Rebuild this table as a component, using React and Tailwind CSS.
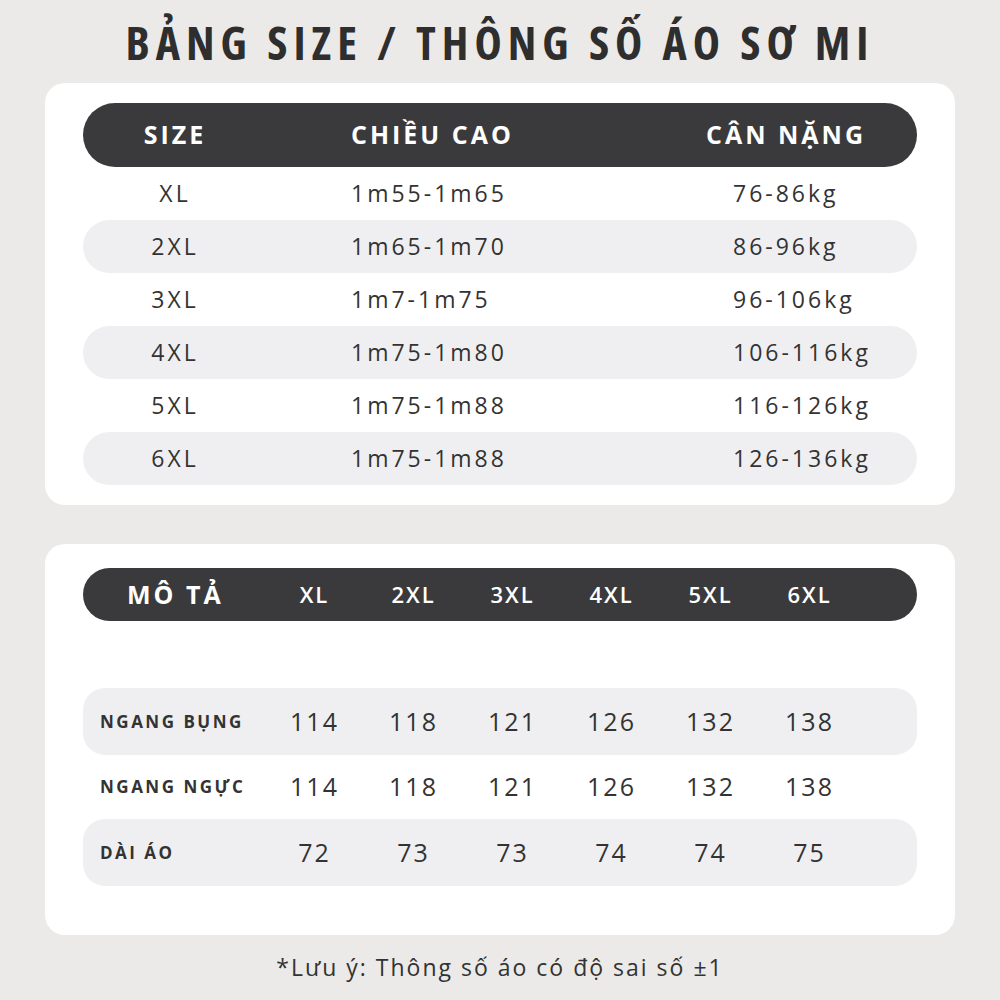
export default function App() {
  const rows1 = [
    ["XL", "1m55-1m65", "76-86kg"],
    ["2XL", "1m65-1m70", "86-96kg"],
    ["3XL", "1m7-1m75", "96-106kg"],
    ["4XL", "1m75-1m80", "106-116kg"],
    ["5XL", "1m75-1m88", "116-126kg"],
    ["6XL", "1m75-1m88", "126-136kg"],
  ];
  const sizes = ["XL", "2XL", "3XL", "4XL", "5XL", "6XL"];
  const rows2 = [
    { label: "NGANG BỤNG", vals: ["114", "118", "121", "126", "132", "138"], gray: true, h: "h-[67px]" },
    { label: "NGANG NGỰC", vals: ["114", "118", "121", "126", "132", "138"], gray: false, h: "h-[64px]" },
    { label: "DÀI ÁO", vals: ["72", "73", "73", "74", "74", "75"], gray: true, h: "h-[67px]" },
  ];
  return (
    <div className="w-[1000px] h-[1000px] bg-[#ebeae8] flex flex-col text-[#333333]" style={{ fontFamily: '"Open Sans", "Noto Sans", sans-serif' }}>
      <div className="h-[83px] flex items-center justify-center">
        <h1 className="text-[46px] font-bold tracking-[6px] text-[#2e2e2e] font-stretch-condensed leading-none">BẢNG SIZE / THÔNG SỐ ÁO SƠ MI</h1>
      </div>
      <div className="mx-[45px] bg-white rounded-[20px] px-[38px] pt-[20px] pb-[20px]">
        <div className="h-[64px] bg-[#3a3a3c] rounded-full grid grid-cols-[184px_439px_1fr] items-center text-white text-[25px] font-bold tracking-[3px]">
          <div className="text-center">SIZE</div>
          <div className="pl-[84px]">CHIỀU CAO</div>
          <div>CÂN NẶNG</div>
        </div>
        {rows1.map((r, i) => (
          <div key={i} className={`h-[53px] rounded-full grid grid-cols-[184px_439px_1fr] items-center text-[23px] font-medium tracking-[3px] ${i % 2 === 1 ? "bg-[#efeff1]" : ""}`}>
            <div className="text-center">{r[0]}</div>
            <div className="pl-[84px]">{r[1]}</div>
            <div className="pl-[27px]">{r[2]}</div>
          </div>
        ))}
      </div>
      <div className="mx-[45px] mt-[39px] bg-white rounded-[20px] px-[38px] pt-[24px] pb-[49px]">
        <div className="h-[53px] bg-[#3a3a3c] rounded-full grid grid-cols-[182px_repeat(6,99px)] items-center text-white">
          <div className="pl-[44px] text-[25px] font-bold tracking-[3px]">MÔ TẢ</div>
          {sizes.map((s) => (
            <div key={s} className="text-center text-[22px] font-semibold tracking-[2px]">{s}</div>
          ))}
        </div>
        <div className="h-[67px]"></div>
        {rows2.map((r, i) => (
          <div key={i} className={`${r.h} rounded-[22px] grid grid-cols-[182px_repeat(6,99px)] items-center ${r.gray ? "bg-[#efeff1]" : ""}`}>
            <div className="pl-[17px] text-[17px] font-bold tracking-[2.5px]">{r.label}</div>
            {r.vals.map((v, j) => (
              <div key={j} className="text-center text-[25px] font-medium tracking-[2px]">{v}</div>
            ))}
          </div>
        ))}
      </div>
      <div className="flex-1 flex items-center justify-center text-[23px] tracking-[2px] text-[#333333]">
        *Lưu ý: Thông số áo có độ sai số ±1
      </div>
    </div>
  );
}
